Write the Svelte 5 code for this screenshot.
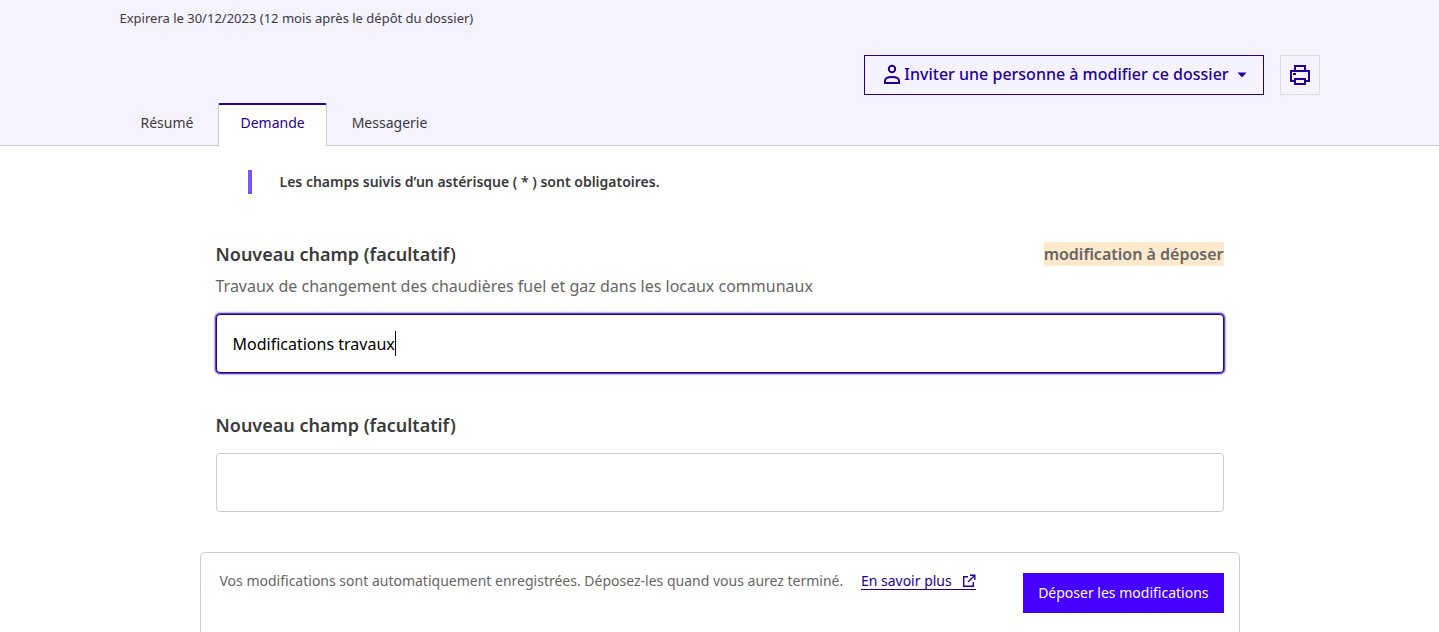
<script>
  import { onMount } from 'svelte';

  let travaux = $state('Modifications travaux');
  let autre = $state('');
  let field;
  let textWidth = $state(0);

  function measure(text) {
    const ctx = document.createElement('canvas').getContext('2d');
    ctx.font = getComputedStyle(field).font;
    return Math.round(ctx.measureText(text).width);
  }

  onMount(() => {
    textWidth = measure(travaux);
    document.fonts?.ready.then(() => (textWidth = measure(travaux)));
  });
</script>

<header>
  <div class="container">
    <p class="expiry">Expirera le 30/12/2023 (12 mois après le dépôt du dossier)</p>
    <div class="actions">
      <button type="button" class="invite">
        <svg width="24" height="24" viewBox="0 0 24 24" fill="none" stroke="currentColor" stroke-width="2" aria-hidden="true">
          <circle cx="12" cy="6" r="3.200" />
          <path d="M5 20v-2.200c0-2.300 3-3.800 7-3.800s7 1.500 7 3.800V20z" />
        </svg>
        <span>Inviter une personne à modifier ce dossier</span>
        <svg class="caret-down" width="10" height="6" viewBox="0 0 10 6" fill="currentColor" aria-hidden="true"><path d="M.5 .5h9L5 5.500z" /></svg>
      </button>
      <button type="button" class="print" aria-label="Imprimer">
        <svg width="24" height="24" viewBox="0 0 24 24" fill="none" stroke="currentColor" stroke-width="2" aria-hidden="true">
          <path d="M7 8V3h10v5M7 18H3V8h18v10h-4M7 16h10v5H7z" />
          <path d="M5 11h3" />
        </svg>
      </button>
    </div>
    <nav class="tabs" aria-label="Dossier">
      <a href="#resume">Résumé</a>
      <a href="#demande" class="active" aria-current="page">Demande</a>
      <a href="#messagerie">Messagerie</a>
    </nav>
  </div>
</header>

<main>
  <p class="notice">Les champs suivis d’un astérisque ( * ) sont obligatoires.</p>

  <div class="group">
    <div class="heading">
      <label for="travaux">Nouveau champ (facultatif)</label>
      <span class="badge">modification à déposer</span>
    </div>
    <p class="hint" id="travaux-hint">Travaux de changement des chaudières fuel et gaz dans les locaux communaux</p>
    <div class="control">
      <input
        id="travaux"
        class="editing"
        type="text"
        aria-describedby="travaux-hint"
        bind:this={field}
        bind:value={travaux}
        oninput={() => (textWidth = measure(travaux))}
      />
      <span class="cursor" style="left: {17 + textWidth}px"></span>
    </div>
  </div>

  <div class="group">
    <div class="heading"><label for="autre">Nouveau champ (facultatif)</label></div>
    <input id="autre" type="text" bind:value={autre} />
  </div>

  <footer>
    <p>
      Vos modifications sont automatiquement enregistrées. Déposez-les quand vous aurez terminé.
      <a href="#aide">En savoir plus
        <svg width="14" height="14" viewBox="0 0 14 14" fill="none" stroke="currentColor" stroke-width="1.400" aria-hidden="true">
          <path d="M6 2.700H1.700v9.600h9.600V8M8 1.200h4.800V6M12.600 1.400L6 8" />
        </svg>
      </a>
    </p>
    <button type="button" class="submit">Déposer les modifications</button>
  </footer>
</main>

<style>
  :global(body) {
    background: #fff;
    color: #3a3a3a;
    font-family: "Noto Sans", sans-serif;
    font-size: 16px;
    line-height: 24px;
    overflow: hidden;
  }
  :global(*) { box-sizing: border-box; }
  p { margin: 0; }
  button, input { font: inherit; }
  svg { display: block; flex: none; }

  header { background: #f5f3ff; border-bottom: 1px solid #ccc; }
  .container { max-width: 1200px; margin: 0 auto; }
  .expiry { padding-top: 6px; font-size: 13px; }
  .actions { display: flex; justify-content: flex-end; gap: 16px; margin-top: 25px; }
  .invite {
    display: flex;
    align-items: center;
    justify-content: center;
    width: 400px;
    height: 40px;
    padding: 0;
    border: 1px solid #240099;
    background: transparent;
    color: #240099;
    font-weight: 500;
    white-space: nowrap;
  }
  .invite span { padding-bottom: 2px; }
  .caret-down { margin-left: 8px; }
  .print {
    display: grid;
    place-items: center;
    width: 40px;
    height: 40px;
    padding: 0;
    border: 1px solid #ddd;
    background: transparent;
    color: #240099;
  }
  .tabs { display: flex; gap: 4px; margin: 8px 0 -1px; }
  .tabs a {
    height: 43px;
    padding: 6px 20px 0;
    border: solid transparent;
    border-width: 2px 1px 0;
    border-radius: 2px 2px 0 0;
    color: #3a3a3a;
    font-size: 14px;
    text-decoration: none;
  }
  .tabs .active { padding: 6px 21px 0; background: #fff; border-color: #240099 #ccc; color: #240099; }

  main { max-width: 1040px; margin: 0 auto; padding: 24px 0 0; }
  .notice {
    margin: 0 48px 48px;
    padding-left: 28px;
    border-left: 4px solid #7755f9;
    font-size: 14px;
    font-weight: 600;
  }
  .group { margin: 0 16px 40px; }
  .heading { display: flex; justify-content: space-between; align-items: center; }
  .heading label { font-size: 18px; font-weight: 600; }
  .badge { background: #ffe9cd; color: #666; font-weight: 600; }
  .hint { margin: 8px 0 16px; color: #666; }
  .heading + input { margin-top: 16px; }
  .control { position: relative; }
  input {
    display: block;
    width: 100%;
    height: 59px;
    padding: 0 16px;
    border: 1px solid #ccc;
    border-radius: 4px;
    background: #fff;
    color: #000;
    outline: 0;
  }
  .editing {
    border-color: #240099;
    box-shadow: 0 0 2px 1px #240099;
    caret-color: transparent;
  }
  .cursor { position: absolute; top: 17px; width: 1px; height: 25px; background: #000; }

  footer {
    display: flex;
    justify-content: space-between;
    min-height: 120px;
    padding: 20px 15px 20px 19px;
    border: 1px solid #ccc;
    border-radius: 5px;
    color: #666;
    font-size: 14px;
  }
  footer p { line-height: 16px; }
  footer a {
    display: inline-flex;
    align-items: center;
    gap: 10px;
    margin-left: 14px;
    border-bottom: 1px solid #240099;
    color: #240099;
    text-decoration: none;
  }
  .submit { height: 40px; padding: 0 15px; border: 0; background: #4500ff; color: #fff; white-space: nowrap; }
</style>
